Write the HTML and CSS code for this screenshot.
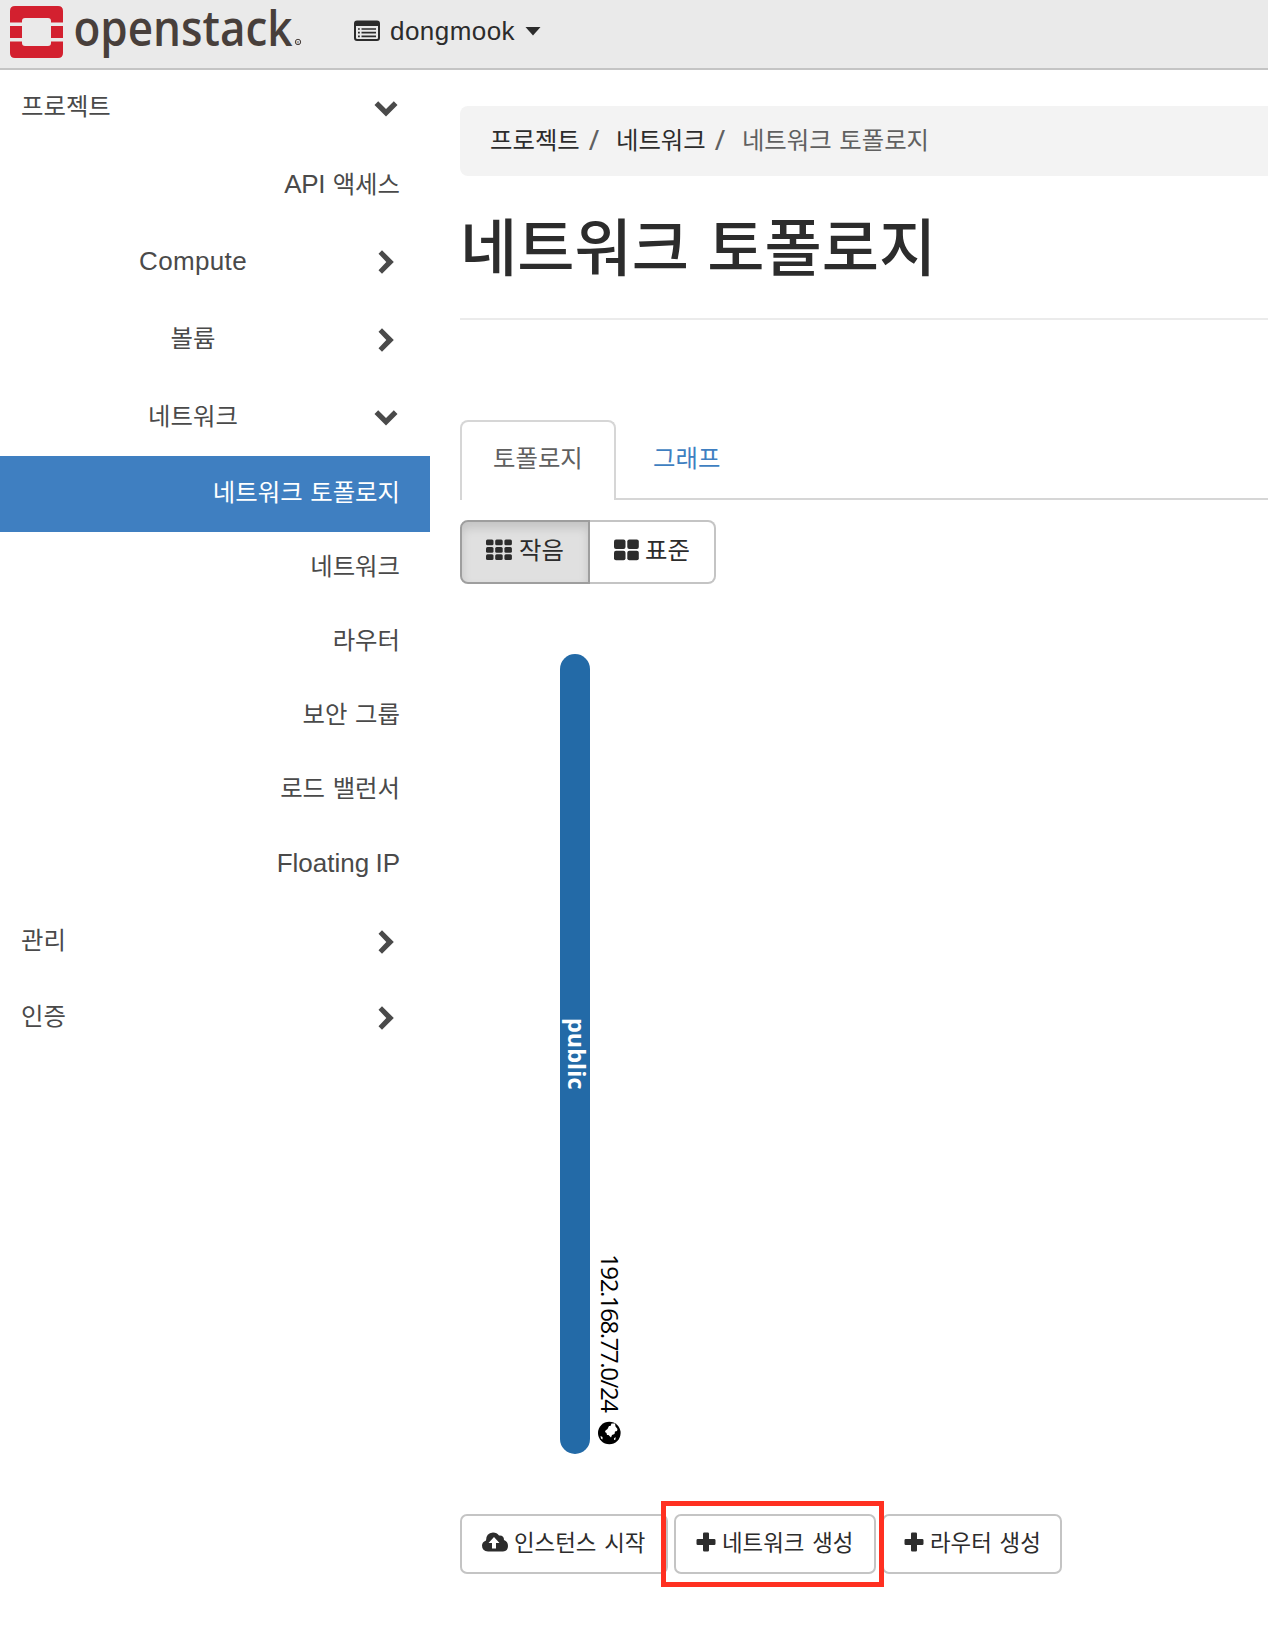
FILE: index.html
```html
<!DOCTYPE html>
<html lang="ko">
<head>
<meta charset="utf-8">
<title>네트워크 토폴로지</title>
<link rel="stylesheet" href="styles.css">
</head>
<body>
<svg class="defs" width="0" height="0" aria-hidden="true">
  <symbol id="down" viewBox="0 0 24 24"><path d="M.5 8 4.200 4.300 12 12l7.800-7.700L23.500 8 12 19.500z"/></symbol>
  <symbol id="right" viewBox="0 0 24 24"><path d="M4.500 3.700 8 .2 19.800 12 8 23.800 4.500 20.300 12.300 12z"/></symbol>
  <symbol id="plus" viewBox="0 0 20 20"><path d="M8.300.5h3.400q1.300 0 1.300 1.300V7h5.200q1.300 0 1.300 1.300v3.400q0 1.300-1.300 1.300H13v5.200q0 1.300-1.300 1.300H8.300Q7 19.500 7 18.200V13H1.800Q.5 13 .5 11.700V8.300Q.5 7 1.800 7H7V1.800Q7 .5 8.300.5z"/></symbol>
</svg>
<header class="topbar">
  <svg class="logo" width="304" height="66" viewBox="0 0 304 66">
    <path fill="#d3202f" d="M10 22.500V11q0-5 5-5h43q5 0 5 5v11.500H51V21q0-3-3-3H25q-3 0-3 3v1.500zM10 26h12v12H10zM51 26h12v12H51zM10 41.500h12V43q0 3 3 3h23q3 0 3-3v-1.500h12V53q0 5-5 5H15q-5 0-5-5z"/>
    <text class="wordmark" x="73.500" y="45.500" textLength="219" lengthAdjust="spacingAndGlyphs">openstack</text>
    <circle cx="298" cy="42" r="2.700" fill="none" stroke="#483f3b" stroke-width="1"/>
    <text class="reg" x="296.500" y="43.800">R</text>
  </svg>
  <div class="domain">
    <svg width="26" height="22" viewBox="0 0 26 22"><path fill="#2c2c2c" fill-rule="evenodd" d="M3 .5h20q3 0 3 3V18q0 3-3 3H3q-3 0-3-3V3.500q0-3 3-3zM2 6v11.800q0 1.200 1.200 1.200h19.600q1.200 0 1.200-1.200V6z"/><path stroke="#2c2c2c" stroke-width="1.700" d="M4 9h1.800M7.500 9H22M4 12.700h1.800M7.500 12.700H22M4 16.400h1.800M7.500 16.400H22"/></svg>
    <span>dongmook</span>
    <svg class="caret" width="16" height="9" viewBox="0 0 16 9"><path fill="#2c2c2c" d="M.5 0h15L8 8.500z"/></svg>
  </div>
</header>
<div class="layout">
  <nav class="sidebar">
    <a class="row top"><span class="name first">프로젝트</span><svg class="chev"><use href="#down"/></svg></a>
    <a class="row leaf api"><span><span class="latin">API</span> 액세스</span></a>
    <a class="row group"><span class="name latin">Compute</span><svg class="chev"><use href="#right"/></svg></a>
    <a class="row group"><span class="name">볼륨</span><svg class="chev"><use href="#right"/></svg></a>
    <a class="row group"><span class="name">네트워크</span><svg class="chev"><use href="#down"/></svg></a>
    <a class="row leaf active"><span>네트워크 토폴로지</span></a>
    <a class="row leaf"><span>네트워크</span></a>
    <a class="row leaf"><span>라우터</span></a>
    <a class="row leaf"><span>보안 그룹</span></a>
    <a class="row leaf"><span>로드 밸런서</span></a>
    <a class="row leaf last"><span class="latin floating">Floating IP</span></a>
    <a class="row top"><span class="name">관리</span><svg class="chev"><use href="#right"/></svg></a>
    <a class="row top"><span class="name">인증</span><svg class="chev"><use href="#right"/></svg></a>
  </nav>
  <main class="content">
    <div class="breadcrumb"><a>프로젝트</a><i>/</i><a>네트워크</a><i>/</i><span>네트워크 토폴로지</span></div>
    <h1>네트워크 토폴로지</h1>
    <div class="tabs"><a class="tab current">토폴로지</a><a class="tab">그래프</a></div>
    <div class="sizes">
      <a class="size pressed"><svg width="26" height="22" viewBox="0 0 26 22"><g fill="#2c2c2c"><rect y=".5" width="7.500" height="5.800" rx="1.500"/><rect x="9.200" y=".5" width="7.500" height="5.800" rx="1.500"/><rect x="18.400" y=".5" width="7.500" height="5.800" rx="1.500"/><rect y="7.900" width="7.500" height="5.800" rx="1.500"/><rect x="9.200" y="7.900" width="7.500" height="5.800" rx="1.500"/><rect x="18.400" y="7.900" width="7.500" height="5.800" rx="1.500"/><rect y="15.300" width="7.500" height="5.800" rx="1.500"/><rect x="9.200" y="15.300" width="7.500" height="5.800" rx="1.500"/><rect x="18.400" y="15.300" width="7.500" height="5.800" rx="1.500"/></g></svg><span>작음</span></a>
      <a class="size"><svg width="25" height="22" viewBox="0 0 25 22"><g fill="#2c2c2c"><rect y=".5" width="11.500" height="9.500" rx="2"/><rect x="13.300" y=".5" width="11.500" height="9.500" rx="2"/><rect y="11.800" width="11.500" height="9.500" rx="2"/><rect x="13.300" y="11.800" width="11.500" height="9.500" rx="2"/></g></svg><span>표준</span></a>
    </div>
    <svg class="topology" width="240" height="800" viewBox="460 654 240 800">
      <rect x="560" y="654" width="30" height="800" rx="15" fill="#236aa7"/>
      <text class="net" transform="translate(567.500 1018) rotate(90)" textLength="71.500" lengthAdjust="spacingAndGlyphs">public</text>
      <text class="cidr" transform="translate(600.500 1254) rotate(90)" textLength="159" lengthAdjust="spacing">192.168.77.0/24</text>
      <circle cx="609.300" cy="1433" r="11.300"/>
      <path fill="#fff" d="m605.500 1430.500 2-1.500 1.500-3 1.500 0 1-2.500 3.500 0 .5 3 2 2.500-.5 2-2 .5-.5 2.500-2.500 1-1 2.500-2.500-2.500-1.500 0-.5-2-1.500-1zM600.500 1436l2 1 0 2.500-1.500-1zM614 1438.500l1.500-1.500 0 2.500-1.500.5z"/>
    </svg>
    <div class="actions">
      <a class="btn launch"><svg width="26" height="20" viewBox="0 0 26 20"><path fill="#2c2c2c" d="M6 19.500Q0 19 0 13.500 0 10 4 8.500 4 1 11 .5q4 0 6 3 5-.5 5 4.500 4 1.500 4 6 0 5-5 5.500z"/><path fill="#fff" d="m12 5 5.500 6H14v5.500h-4V11H6.500z"/></svg><span>인스턴스 시작</span></a>
      <a class="btn network"><svg width="20" height="20"><use href="#plus"/></svg><span>네트워크 생성</span></a>
      <a class="btn router"><svg width="20" height="20"><use href="#plus"/></svg><span>라우터 생성</span></a>
      <div class="highlight"></div>
    </div>
  </main>
</div>
</body>
</html>
```
FILE: styles.css
```css
* { box-sizing: border-box; }
body {
  margin: 0;
  width: 1268px;
  height: 1636px;
  overflow: hidden;
  background: #fff;
  color: #4a4a4a;
  font: 24.4px/36px "Noto Sans CJK KR", sans-serif;
  word-spacing: .8px;
}
.defs { position: absolute; }
svg { display: block; flex: none; }
.latin {
  font-family: "Liberation Sans", Arial, sans-serif;
  font-size: 26px;
  letter-spacing: .35px;
}
.topbar {
  display: flex;
  height: 70px;
  background: #eaeaea;
  border-bottom: 2px solid #c4c4c4;
}
.wordmark { font: 600 49px "Open Sans", sans-serif; fill: #483f3b; }
.reg { font: 4px "Liberation Sans", sans-serif; fill: #483f3b; }
.domain {
  display: flex;
  align-items: center;
  height: 62px;
  margin-left: 50px;
  color: #2c2c2c;
  font: 26px "Liberation Sans", Arial, sans-serif;
  letter-spacing: .45px;
}
.domain span { margin-left: 10px; }
.caret { margin-left: 10px; }

.layout { display: flex; }
.sidebar { width: 430px; flex: none; }
.row { display: flex; align-items: center; height: 76px; padding: 2px 32px 0 12px; }
.row > span { margin-top: -7px; }
.row > .first { margin-top: -9px; }
.row.top { padding-left: 21px; }
.name { flex: 1; }
.row.group { height: 78px; padding-top: 0; }
.group .name { text-align: center; }
.row.group > .latin { margin-top: -2px; }
.chev { width: 24px; height: 24px; fill: #4a4a4a; }
.leaf { height: 74px; justify-content: flex-end; padding-right: 30px; }
.leaf > span { margin-top: -10px; }
.leaf.active > span { margin-top: -9px; }
.leaf.api { height: 77px; }
.leaf.api > span { margin-top: -5px; }
.api .latin { letter-spacing: -.4px; }
.leaf > .floating { margin-top: -8px; letter-spacing: 0; word-spacing: -1px; }
.leaf.active { height: 76px; margin-top: -1px; background: #3f7fc1; color: #fff; }
.leaf.last { height: 75px; }

.content { flex: 1; padding: 36px 0 0 30px; }
.breadcrumb {
  display: flex;
  height: 70px;
  padding: 15px 30px;
  background: #f3f3f3;
  border-radius: 8px 0 0 8px;
  color: #606060;
}
.breadcrumb a { color: #2c2c2c; }
.breadcrumb i {
  width: 36.2px;
  padding-left: 9px;
  font: 28px/36px "Noto Sans", sans-serif;
}
h1 {
  height: 144px;
  margin: 0;
  padding-top: 22px;
  border-bottom: 2px solid #ebebeb;
  color: #2c2c2c;
  font-size: 62.2px;
  font-weight: 500;
  line-height: 92px;
  word-spacing: 1px;
}
.tabs { display: flex; height: 80px; margin-top: 100px; }
.tabs::after { content: ""; flex: 1; border-bottom: 2px solid #d6d6d6; }
.tab {
  padding: 19px 30px 0 37px;
  border-bottom: 2px solid #d6d6d6;
  color: #3f7fc1;
}
.tab.current {
  width: 156px;
  padding: 17px 0 0 31px;
  border: 2px solid #d6d6d6;
  border-bottom: 0;
  border-radius: 8px 8px 0 0;
  color: #606060;
}
.sizes { display: flex; margin-top: 20px; color: #2c2c2c; }
.size {
  display: flex;
  width: 126px;
  height: 64px;
  padding: 9px 0 0 24px;
  border: 2px solid #c4c4c4;
  border-left: 0;
  border-radius: 0 8px 8px 0;
}
.size svg { margin: 8px 6px 0 0; }
.size.pressed {
  width: 130px;
  border: 2px solid #9e9e9e;
  border-radius: 8px 0 0 8px;
  background: #e0e0e0;
  box-shadow: inset 0 6px 10px rgba(0, 0, 0, .125);
}
.pressed svg { margin-right: 7px; }
.topology { margin-top: 70px; }
.net { font: 700 24px "Open Sans", sans-serif; fill: #fff; word-spacing: 0; }
.cidr { font: 24px "Open Sans", sans-serif; fill: #000; }
.actions { position: relative; display: flex; margin-top: 60px; }
.btn {
  display: flex;
  height: 60px;
  padding: 7px 0 0 20px;
  border: 2px solid #c4c4c4;
  border-radius: 7px;
  color: #2c2c2c;
  fill: #2c2c2c;
  font-size: 22.4px;
  word-spacing: 1.500px;
}
.btn svg { margin: 9px 6px 0 0; }
.launch { width: 208px; }
.network { width: 202px; margin-left: 6px; }
.router { width: 180px; margin-left: 6px; }
.highlight {
  position: absolute;
  left: 200.500px;
  top: -13px;
  width: 223px;
  height: 86px;
  border: 5px solid #ff3021;
}
```
